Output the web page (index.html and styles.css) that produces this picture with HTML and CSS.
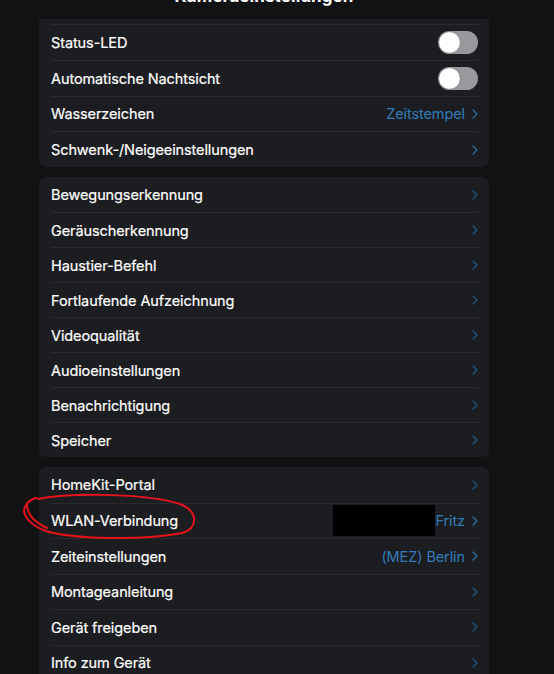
FILE: index.html
```html
<!DOCTYPE html>
<html lang="de">
<head>
<meta charset="utf-8">
<title>Kameraeinstellungen</title>
<link rel="stylesheet" href="styles.css">
</head>
<body>
<div class="page">
  <header class="header"><h1 class="title">Kameraeinstellungen</h1></header>

  <section class="card card-first">
    <div class="row"><span class="label">Status-LED</span><span class="toggle"><span class="knob"></span></span></div>
    <div class="row"><span class="label">Automatische Nachtsicht</span><span class="toggle"><span class="knob"></span></span></div>
    <div class="row"><span class="label">Wasserzeichen</span><span class="value">Zeitstempel</span><svg class="chev bright" viewBox="0 0 6 10"><path d="M1 1L5 5L1 9"/></svg></div>
    <div class="row"><span class="label">Schwenk-/Neigeeinstellungen</span><svg class="chev bright" viewBox="0 0 6 10"><path d="M1 1L5 5L1 9"/></svg></div>
  </section>

  <section class="card card-mid">
    <div class="row"><span class="label">Bewegungserkennung</span><svg class="chev" viewBox="0 0 6 10"><path d="M1 1L5 5L1 9"/></svg></div>
    <div class="row"><span class="label">Geräuscherkennung</span><svg class="chev" viewBox="0 0 6 10"><path d="M1 1L5 5L1 9"/></svg></div>
    <div class="row"><span class="label">Haustier-Befehl</span><svg class="chev" viewBox="0 0 6 10"><path d="M1 1L5 5L1 9"/></svg></div>
    <div class="row"><span class="label">Fortlaufende Aufzeichnung</span><svg class="chev" viewBox="0 0 6 10"><path d="M1 1L5 5L1 9"/></svg></div>
    <div class="row"><span class="label">Videoqualität</span><svg class="chev" viewBox="0 0 6 10"><path d="M1 1L5 5L1 9"/></svg></div>
    <div class="row"><span class="label">Audioeinstellungen</span><svg class="chev" viewBox="0 0 6 10"><path d="M1 1L5 5L1 9"/></svg></div>
    <div class="row"><span class="label">Benachrichtigung</span><svg class="chev" viewBox="0 0 6 10"><path d="M1 1L5 5L1 9"/></svg></div>
    <div class="row"><span class="label">Speicher</span><svg class="chev" viewBox="0 0 6 10"><path d="M1 1L5 5L1 9"/></svg></div>
  </section>

  <section class="card card-last">
    <div class="row"><span class="label">HomeKit-Portal</span><svg class="chev" viewBox="0 0 6 10"><path d="M1 1L5 5L1 9"/></svg></div>
    <div class="row"><span class="label">WLAN-Verbindung</span><span class="value"><span class="redact"></span>Fritz</span><svg class="chev bright" viewBox="0 0 6 10"><path d="M1 1L5 5L1 9"/></svg></div>
    <div class="row"><span class="label">Zeiteinstellungen</span><span class="value">(MEZ) Berlin</span><svg class="chev bright" viewBox="0 0 6 10"><path d="M1 1L5 5L1 9"/></svg></div>
    <div class="row"><span class="label">Montageanleitung</span><svg class="chev" viewBox="0 0 6 10"><path d="M1 1L5 5L1 9"/></svg></div>
    <div class="row"><span class="label">Gerät freigeben</span><svg class="chev" viewBox="0 0 6 10"><path d="M1 1L5 5L1 9"/></svg></div>
    <div class="row"><span class="label">Info zum Gerät</span><svg class="chev" viewBox="0 0 6 10"><path d="M1 1L5 5L1 9"/></svg></div>
  </section>
</div>

<svg class="annotation" viewBox="0 0 554 674" width="554" height="674">
  <path d="M38 499 C75 492 150 494 180 504 C198 511 199 528 182 533 C142 541 72 539 46 531 C29 525 20 513 26 505 C28 502 32 499 36 498"/>
  <path d="M27 504 C27 514 34 522 47 528"/>
</svg>
</body>
</html>
```

FILE: styles.css
```css
* { box-sizing: border-box; }

html, body {
  margin: 0;
  padding: 0;
  background: #111214;
}

body {
  width: 554px;
  height: 674px;
  overflow: hidden;
  position: relative;
  font-family: Inter, "Liberation Sans", sans-serif;
  color: #ffffff;
}

.page {
  width: 450px;
  margin-left: 39px;
}

.header {
  height: 19px;
  overflow: hidden;
  display: flex;
  justify-content: center;
}

.title {
  margin: -14px 0 0 0;
  font-size: 17px;
  line-height: 20px;
  font-weight: 700;
  letter-spacing: 0.1px;
}

.card {
  background: #1c1d20;
  border-radius: 7px;
  margin-bottom: 10px;
}

.card-first {
  border-radius: 0 0 7px 7px;
  padding-top: 5px;
}

.row {
  height: 35.3px;
  margin: 0 11px 0 12px;
  display: flex;
  align-items: center;
  border-top: 1px solid #2a2b2f;
}

.card-first .row { height: 35.75px; }
.card-mid .row { height: 35px; }
.card-last .row { height: 35.5px; }

.card .row:first-child { border-top: none; }
.card-first .row:first-child { border-top: 1px solid #2a2b2f; }

.label {
  flex: 1;
  font-size: 14.5px;
  letter-spacing: -0.1px;
  color: #ffffff;
  -webkit-text-stroke: 0.2px #ffffff;
}

.value {
  display: flex;
  align-items: center;
  font-size: 14.5px;
  letter-spacing: -0.1px;
  color: #317cba;
  margin-right: 7px;
}

.redact {
  display: inline-block;
  width: 102px;
  height: 31px;
  background: #000;
}

.chev {
  width: 6px;
  height: 10px;
  fill: none;
  stroke: #1d5580;
  stroke-width: 1.3;
  stroke-linecap: round;
  stroke-linejoin: round;
}

.chev.bright { stroke: #2d6fa3; }

.toggle {
  width: 40px;
  height: 23px;
  border-radius: 12px;
  background: #99989d;
  display: flex;
  align-items: center;
  padding-left: 1px;
}

.knob {
  width: 21px;
  height: 21px;
  border-radius: 50%;
  background: #ffffff;
  box-shadow: 0 0 1px rgba(0,0,0,0.5);
}

.annotation {
  position: absolute;
  left: 0;
  top: 0;
  fill: none;
  stroke: #e8121a;
  stroke-width: 2;
  stroke-linecap: round;
  pointer-events: none;
}
```
